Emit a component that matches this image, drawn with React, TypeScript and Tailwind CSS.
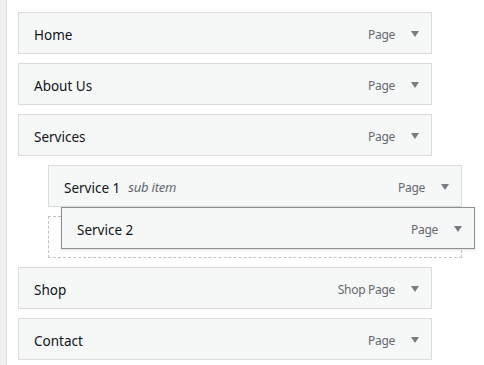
const items = [
  { title: "Home", type: "Page", depth: 0 },
  { title: "About Us", type: "Page", depth: 0 },
  { title: "Services", type: "Page", depth: 0 },
  { title: "Service 1", type: "Page", depth: 1, sub: true },
];

const Arrow = () => (
  <svg width="8" height="6" viewBox="0 0 8 6" className="ml-4 mb-[3px]">
    <path d="M0 0 H8 L4 6 Z" fill="#787c82" />
  </svg>
);

const MenuItem = ({
  title,
  type,
  sub,
  dragging,
}: {
  title: string;
  type: string;
  sub?: boolean;
  dragging?: boolean;
}) => (
  <div
    className={
      "flex h-[42px] w-[414px] items-center border bg-[#f6f7f7] pt-[4px] pl-[15px] pr-[12px] " +
      (dragging ? "border-[#8c8f94]" : "border-[#dcdcde]")
    }
  >
    <span className="text-[13.5px] font-normal text-[#101517]">{title}</span>
    {sub && (
      <span className="ml-2 text-[13px] italic tracking-[-0.2px] text-[#646970]">
        sub item
      </span>
    )}
    <span className="ml-auto text-[12px] tracking-[-0.3px] text-[#646970]">{type}</span>
    <Arrow />
  </div>
);

export default function App() {
  return (
    <div
      className="flex h-[365px] w-[484px] bg-white"
      style={{ fontFamily: '"Noto Sans", "Open Sans", sans-serif' }}
    >
      <div className="h-full w-[7px] border-r border-[#dcdcde] bg-[#f0f0f1]" />
      <div className="relative flex flex-col gap-[9px] pt-[12px] pl-[11px]">
        {items.map((item) => (
          <div key={item.title} className={item.depth ? "ml-[30px]" : ""}>
            <MenuItem title={item.title} type={item.type} sub={item.sub} />
          </div>
        ))}
        {/* drop placeholder */}
        <div className="ml-[30px] h-[42px] w-[414px] border border-dashed border-[#c3c4c7]" />
        <MenuItem title="Shop" type="Shop Page" />
        <MenuItem title="Contact" type="Page" />

        {/* item being dragged */}
        <div className="absolute left-[54px] top-[207px] shadow-sm">
          <MenuItem title="Service 2" type="Page" dragging />
        </div>
      </div>
    </div>
  );
}
